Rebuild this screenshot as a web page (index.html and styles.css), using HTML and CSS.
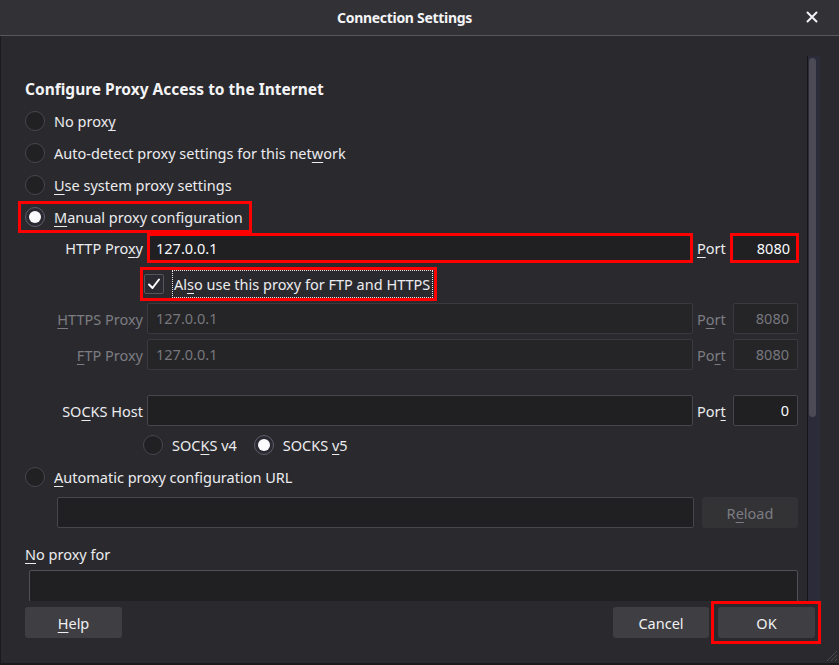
FILE: index.html
```html
<!DOCTYPE html>
<html lang="en">
<head>
    <meta charset="UTF-8">
    <title>Connection Settings</title>
    <link rel="stylesheet" href="styles.css">
</head>
<body>

<div class="dialog">
    <div class="titlebar">
        <span class="title">Connection Settings</span>
        <span class="close">
            <svg width="12" height="12" viewBox="0 0 12 12"><path d="M1.5 1.5 L10.5 10.5 M10.5 1.5 L1.5 10.5" stroke="#f2f2f4" stroke-width="2" stroke-linecap="round"/></svg>
        </span>
    </div>

    <div class="main">
        <div class="content">
            <h1>Configure Proxy Access to the Internet</h1>

            <!-- proxy type -->
            <div class="radio-row"><span class="radio"></span><span>No prox<u>y</u></span></div>
            <div class="radio-row"><span class="radio"></span><span>Auto-detect proxy settings for this net<u>w</u>ork</span></div>
            <div class="radio-row"><span class="radio"></span><span><u>U</u>se system proxy settings</span></div>
            <div class="radio-row">
                <span class="marked-row"><span class="radio checked"></span><span><u>M</u>anual proxy configuration</span></span>
            </div>

            <!-- manual config -->
            <div class="field-row row-http">
                <span class="field-label">HTTP Pro<u>x</u>y</span>
                <div class="input marked">127.0.0.1</div>
                <span class="port-label"><u>P</u>ort</span>
                <div class="input port marked">8080</div>
            </div>
            <div class="field-row row-check">
                <span class="check-box">
                    <span class="checkbox">
                        <svg width="14" height="14" viewBox="0 0 14 14"><path d="M2 7.5 L5.5 11 L12 2.5" stroke="#fbfbfe" stroke-width="2" fill="none" stroke-linecap="round" stroke-linejoin="round"/></svg>
                    </span>
                    <span class="focus-label">Al<u>s</u>o use this proxy for FTP and HTTPS</span>
                </span>
            </div>
            <div class="field-row row-https disabled">
                <span class="field-label"><u>H</u>TTPS Proxy</span>
                <div class="input">127.0.0.1</div>
                <span class="port-label">P<u>o</u>rt</span>
                <div class="input port">8080</div>
            </div>
            <div class="field-row row-ftp disabled">
                <span class="field-label"><u>F</u>TP Proxy</span>
                <div class="input">127.0.0.1</div>
                <span class="port-label">Po<u>r</u>t</span>
                <div class="input port">8080</div>
            </div>
            <div class="field-row row-socks">
                <span class="field-label">SO<u>C</u>KS Host</span>
                <div class="input"></div>
                <span class="port-label">Por<u>t</u></span>
                <div class="input port">0</div>
            </div>
            <div class="socks-versions">
                <span class="socks-opt"><span class="radio"></span><span>SOC<u>K</u>S v4</span></span>
                <span class="socks-opt"><span class="radio checked"></span><span>SOCKS <u>v</u>5</span></span>
            </div>

            <!-- auto config -->
            <div class="radio-row"><span class="radio"></span><span><u>A</u>utomatic proxy configuration URL</span></div>
            <div class="url-row">
                <div class="input url"></div>
                <div class="btn disabled-btn">R<u>e</u>load</div>
            </div>

            <div class="no-proxy-label"><u>N</u>o proxy for</div>
            <div class="textarea"></div>
        </div>

        <div class="scrollbar"><div class="thumb"></div></div>
    </div>

    <div class="footer">
        <div class="btn help"><u>H</u>elp</div>
        <div class="spacer"></div>
        <div class="btn cancel">Cancel</div>
        <div class="ok-mark"><div class="btn ok">OK</div></div>
    </div>

    <svg class="grip" width="14" height="14" viewBox="0 0 14 14"><path d="M13 3 L3 13 M13 7 L7 13 M13 11 L11 13" stroke="#4a4a50" stroke-width="1"/></svg>
</div>

</body>
</html>
```

FILE: styles.css
```css
html, body {
    margin: 0;
    padding: 0;
    background-color: #2a2a2e;
}
body {
    font-family: "Noto Sans", "Open Sans", sans-serif;
    font-size: 14.5px;
    color: #ececef;
}
u {
    text-decoration-thickness: 1px;
    text-underline-offset: 3px;
}
.dialog {
    position: relative;
    width: 839px;
    height: 665px;
    box-sizing: border-box;
    border-bottom: 2px solid #1b1b1d;
    background-color: #2a2a2e;
    box-shadow: inset 1px 0 0 #1b1b1d;
    overflow: hidden;
}
.titlebar {
    height: 35px;
    border-bottom: 1px solid #57575c;
    background-color: #323236;
    display: flex;
    align-items: center;
    justify-content: center;
    position: relative;
}
.title {
    font-size: 14px;
    font-weight: bold;
    color: #f4f4f6;
    letter-spacing: -0.3px;
    margin-left: -30px;
}
.close {
    position: absolute;
    right: 21px;
    top: 11px;
    display: flex;
}
.main {
    display: flex;
    height: 565px;
    overflow: hidden;
}
.content {
    flex: 1;
    padding: 0 9px 0 25px;
}
h1 {
    font-size: 15.5px;
    font-weight: bold;
    line-height: 22px;
    margin: 42px 0 5px 0;
    color: #f4f4f6;
}
.radio-row {
    height: 32px;
    display: flex;
    align-items: center;
    white-space: nowrap;
}
.radio {
    width: 18px;
    height: 18px;
    border-radius: 50%;
    border: 1px solid #46464c;
    background-color: #212124;
    margin-right: 9px;
    flex-shrink: 0;
    position: relative;
}
.radio.checked {
    border-color: #5d5d6c;
    background-color: #2b2a33;
}
.radio.checked::after {
    content: "";
    position: absolute;
    left: 3px;
    top: 3px;
    width: 12px;
    height: 12px;
    border-radius: 50%;
    background-color: #fbfbfe;
}
.marked-row {
    display: inline-flex;
    align-items: center;
    border: 3px solid #ff0000;
    height: 26px;
    padding: 0 6px 0 4px;
    margin-left: -7px;
}
.field-row {
    display: grid;
    grid-template-columns: 118px 546px 32px 65px;
    column-gap: 4px;
    align-items: center;
    height: 31px;
}
.field-label {
    text-align: right;
    white-space: nowrap;
}
.port-label {
    white-space: nowrap;
}
.input {
    box-sizing: border-box;
    height: 31px;
    border: 1px solid #46464b;
    border-radius: 2px;
    background-color: #202023;
    padding: 0 8px;
    line-height: 29px;
    color: #fbfbfe;
}
.input.port {
    text-align: right;
}
.input.marked {
    border: 3px solid #ff0000;
    border-radius: 0;
    line-height: 25px;
    padding: 0 6px;
}
.row-http {
    height: 30px;
}
.row-http .input {
    height: 30px;
}
.row-http .input.port {
    margin-left: -3px;
    width: 69px;
}
.row-check {
    margin-top: 4px;
    height: 34px;
    display: flex;
    padding-left: 115px;
}
.check-box {
    display: inline-flex;
    align-items: center;
    border: 3px solid #ff0000;
    height: 28px;
    padding: 0 1px 0 1px;
}
.checkbox {
    width: 18px;
    height: 18px;
    border: 1px solid #55555c;
    border-radius: 2px;
    background-color: #2b2a33;
    display: flex;
    align-items: center;
    justify-content: center;
    margin-right: 8px;
}
.focus-label {
    border: 1px dotted #e8e8ea;
    height: 26px;
    line-height: 26px;
    padding: 0 2px 0 1px;
    white-space: nowrap;
}
.row-https {
    margin-top: 2px;
}
.row-ftp {
    margin-top: 5px;
}
.disabled {
    color: #7c7c82;
}
.disabled .input {
    color: #77777d;
    background-color: #252528;
    border-color: #3a3a3e;
}
.row-socks {
    margin-top: 25px;
}
.socks-versions {
    height: 32px;
    margin-top: 3px;
    display: flex;
    align-items: center;
    padding-left: 118px;
}
.socks-opt {
    display: inline-flex;
    align-items: center;
    margin-right: 17px;
    white-space: nowrap;
}
.url-row {
    display: flex;
    height: 31px;
    margin-top: 4px;
    padding-left: 32px;
    gap: 8px;
}
.input.url {
    width: 637px;
}
.btn {
    box-sizing: border-box;
    height: 31px;
    width: 97px;
    border-radius: 3px;
    background-color: #3f3f43;
    display: flex;
    align-items: center;
    justify-content: center;
    color: #f0f0f2;
}
.disabled-btn {
    width: 96px;
    background-color: #333336;
    color: #7c7c82;
}
.no-proxy-label {
    margin-top: 16px;
    line-height: 20px;
}
.textarea {
    margin-top: 6px;
    margin-left: 4px;
    height: 60px;
    border: 1px solid #505055;
    border-radius: 2px;
    background-color: #202023;
}
.scrollbar {
    width: 12px;
    margin: 20px 19px 0 0;
    border-left: 1px solid #151517;
    background-color: #2c2b3a;
    position: relative;
}
.thumb {
    position: absolute;
    left: 1px;
    top: 2px;
    width: 7px;
    height: 359px;
    border-radius: 4px;
    background-color: #4c4b55;
}
.footer {
    display: flex;
    align-items: flex-start;
    padding: 0 18px 0 25px;
}
.help,
.cancel {
    margin-top: 6px;
}
.cancel {
    width: 96px;
}
.spacer {
    flex: 1;
}
.ok-mark {
    border: 3px solid #ff0000;
    padding: 3px 3px 3px 4px;
    margin-left: 2px;
}
.grip {
    position: absolute;
    right: 1px;
    bottom: 1px;
}
```
